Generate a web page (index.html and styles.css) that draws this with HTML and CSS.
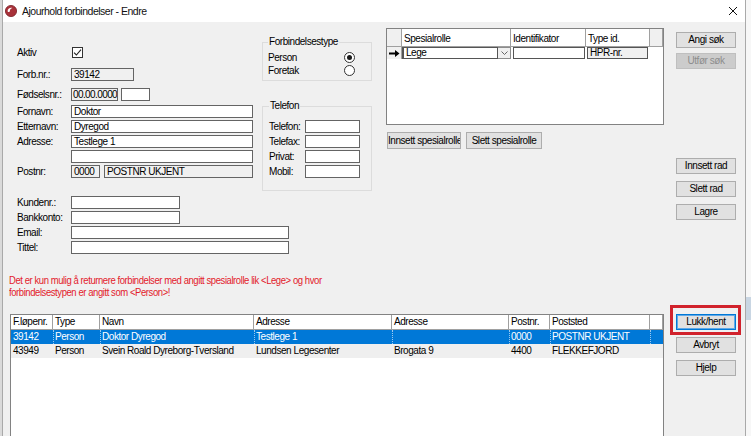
FILE: index.html
```html
<!DOCTYPE html>
<html lang="no">
<head>
<meta charset="utf-8">
<title>Ajourhold forbindelser - Endre</title>
<link rel="stylesheet" href="styles.css">
</head>
<body>
<div class="left-edge"></div>
<div class="window">
  <div class="titlebar">
    <svg class="app-icon" width="12" height="12" viewBox="0 0 12 12">
      <circle cx="6" cy="6" r="5.6" fill="#a8323a" stroke="#7a1e24" stroke-width="0.8"/>
      <path d="M2.6 6.2 C2.6 3.6 5 2.2 7.4 2.9 C5.6 3.4 4.7 4.6 4.9 6.6 C4.1 7.4 3 7.2 2.6 6.2 Z" fill="#fff"/>
    </svg>
    <span class="title">Ajourhold forbindelser - Endre</span>
    <svg class="close" width="10" height="10" viewBox="0 0 10 10">
      <path d="M1 1 L9 9 M9 1 L1 9" stroke="#111" stroke-width="1" fill="none"/>
    </svg>
  </div>
  <div class="client">
    <div class="main">
      <div class="top">
        <div class="form-top">
          <div class="row row-aktiv"><span class="lbl">Aktiv</span><span class="check"><svg width="9" height="9" viewBox="0 0 9 9"><path d="M1 4.6 L3.4 7 L8 1.6" stroke="#222" stroke-width="1.1" fill="none"/></svg></span></div>
          <div class="row row-forb"><span class="lbl">Forb.nr.:</span><span class="inp ro w63">39142</span></div>
          <div class="row row-fods"><span class="lbl">Fødselsnr.:</span><span class="inp ro w47 tight">00.00.0000</span><span class="inp w29 ml3"></span></div>
          <div class="row row-fornavn"><span class="lbl">Fornavn:</span><span class="inp w182">Doktor</span></div>
          <div class="row"><span class="lbl">Etternavn:</span><span class="inp w182">Dyregod</span></div>
          <div class="row"><span class="lbl">Adresse:</span><span class="inp w182">Testlege 1</span></div>
          <div class="row"><span class="lbl"></span><span class="inp w182"></span></div>
          <div class="row"><span class="lbl">Postnr:</span><span class="inp ro w29">0000</span><span class="inp ro w149 ml4">POSTNR UKJENT</span></div>
        </div>

        <div class="groups">
          <fieldset class="grp grp-type">
            <legend>Forbindelsestype</legend>
            <div class="opt"><span class="opt-lbl">Person</span><span class="radio on"></span></div>
            <div class="opt"><span class="opt-lbl">Foretak</span><span class="radio"></span></div>
          </fieldset>
          <fieldset class="grp grp-tel">
            <legend>Telefon</legend>
            <div class="row row-first"><span class="lbl-t">Telefon:</span><span class="inp w55"></span></div>
            <div class="row"><span class="lbl-t">Telefax:</span><span class="inp w55"></span></div>
            <div class="row"><span class="lbl-t">Privat:</span><span class="inp w55"></span></div>
            <div class="row"><span class="lbl-t">Mobil:</span><span class="inp w55"></span></div>
          </fieldset>
        </div>

        <div class="spec">
          <div class="sgrid">
            <div class="srow shead">
              <span class="c ind"></span>
              <span class="c">Spesialrolle</span>
              <span class="c">Identifikator</span>
              <span class="c">Type id.</span>
              <span class="c blank"></span>
            </div>
            <div class="srow sdata">
              <span class="c ind"><svg width="11" height="7" viewBox="0 0 11 7"><path d="M0 2.4 H6 V0 L10.5 3.5 L6 7 V4.6 H0 Z" fill="#000"/></svg></span>
              <span class="c c-lege"><span class="ed ed-lege">Lege</span><span class="dd"><svg width="9" height="6" viewBox="0 0 9 6"><path d="M1.5 1.5 L4.5 4.5 L7.5 1.5" stroke="#666" stroke-width="1" fill="none"/></svg></span></span>
              <span class="c c-id"><span class="ed"></span></span>
              <span class="c c-type"><span class="ed ro">HPR-nr.</span></span>
              <span class="c blank-d"></span>
            </div>
          </div>
          <div class="spec-btns">
            <button class="btn b74">Innsett spesialrolle</button>
            <button class="btn b76">Slett spesialrolle</button>
          </div>
        </div>

        <div class="form-bot">
          <div class="row row-first"><span class="lbl">Kundenr.:</span><span class="inp w109"></span></div>
          <div class="row"><span class="lbl">Bankkonto:</span><span class="inp w109"></span></div>
          <div class="row"><span class="lbl">Email:</span><span class="inp w218"></span></div>
          <div class="row"><span class="lbl">Tittel:</span><span class="inp w218"></span></div>
        </div>
      </div>

      <p class="msg">Det er kun mulig å returnere forbindelser med angitt spesialrolle lik &lt;Lege&gt; og hvor<br>forbindelsestypen er angitt som &lt;Person&gt;!</p>

      <div class="results">
        <div class="rrow rhead"><span>F.løpenr.</span><span>Type</span><span>Navn</span><span>Adresse</span><span>Adresse</span><span>Postnr.</span><span>Poststed</span><span></span></div>
        <div class="rrow sel"><span>39142</span><span>Person</span><span>Doktor Dyregod</span><span>Testlege 1</span><span></span><span>0000</span><span>POSTNR UKJENT</span><span></span></div>
        <div class="rrow alt"><span>43949</span><span>Person</span><span>Svein Roald Dyreborg-Tversland</span><span>Lundsen Legesenter</span><span>Brogata 9</span><span>4400</span><span>FLEKKEFJORD</span><span></span></div>
      </div>
    </div>

    <div class="side">
      <button class="btn sb b-angi">Angi søk</button>
      <button class="btn sb b-utfor" disabled>Utfør søk</button>
      <button class="btn sb b-innsett">Innsett rad</button>
      <button class="btn sb b-next">Slett rad</button>
      <button class="btn sb b-next">Lagre</button>
      <div class="mark"><button class="btn sb default">Lukk/hent</button></div>
      <button class="btn sb b-next">Avbryt</button>
      <button class="btn sb b-next">Hjelp</button>
    </div>
  </div>
</div>
<div class="right-edge"><div class="re-block"></div></div>
</body>
</html>
```

FILE: styles.css
```css
* { box-sizing: border-box; }
html, body { margin: 0; padding: 0; }
body {
  width: 751px;
  height: 436px;
  overflow: hidden;
  display: flex;
  background: #f4f4f4;
  font-family: "Liberation Sans", Arial, sans-serif;
  font-size: 10px;
  letter-spacing: -0.45px;
  color: #000;
}

.left-edge { width: 2px; flex: none; background: #dadada; }

.window {
  width: 744px;
  height: 436px;
  flex: none;
  display: flex;
  flex-direction: column;
  overflow: hidden;
  background: #f0f0f0;
  border-left: 1px solid #a9a9a9;
  border-right: 1px solid #a9a9a9;
}

.right-edge {
  flex: 1;
  background: #f7f7f7;
  padding-top: 297px;
}
.re-block { height: 23px; background: #c9d6e3; }

/* title bar */
.titlebar {
  height: 22px;
  flex: none;
  display: flex;
  align-items: center;
  background: #fff;
  padding: 0 7px 0 2px;
}
.app-icon { flex: none; margin-right: 5px; }
.title { font-size: 10.5px; letter-spacing: -0.5px; color: #111; }
.close { margin-left: auto; flex: none; }

/* client area */
.client { flex: 1; display: flex; min-height: 0; }
.main { width: 667px; flex: none; padding: 0 6px; }
.side {
  flex: 1;
  display: flex;
  flex-direction: column;
  align-items: flex-start;
  padding-left: 6px;
}

.top {
  display: grid;
  grid-template-columns: 253px 110px 14px 278px;
  grid-template-areas:
    "ftop groups . spec"
    "fbot fbot . .";
  align-items: start;
}
.form-top { grid-area: ftop; padding-left: 8px; }
.groups { grid-area: groups; }
.spec { grid-area: spec; margin-top: 6px; }
.form-bot { grid-area: fbot; padding-left: 8px; margin-top: 5px; }

/* rows & inputs */
.row {
  display: flex;
  align-items: center;
  height: 13px;
  margin-top: 2px;
}
.row-first { margin-top: 0; }
.row-aktiv { height: 11px; margin-top: 25px; }
.row-forb { margin-top: 10px; }
.row-fods { margin-top: 7px; }
.row-fornavn { margin-top: 4px; }

.lbl { width: 54px; flex: none; line-height: 13px; white-space: nowrap; }
.lbl-t { width: 36px; flex: none; line-height: 13px; white-space: nowrap; }

.inp {
  flex: none;
  display: block;
  height: 13px;
  background: #fff;
  border: 1px solid #646464;
  padding-left: 2px;
  line-height: 11px;
  white-space: nowrap;
  overflow: hidden;
}
.inp.ro { background: #f0f0f0; }
.inp.tight { padding-left: 1px; letter-spacing: -0.6px; }
.w29 { width: 29px; }
.w47 { width: 47px; }
.w55 { width: 55px; }
.w63 { width: 63px; }
.w109 { width: 109px; }
.w149 { width: 149px; }
.w182 { width: 182px; }
.w218 { width: 218px; }
.ml3 { margin-left: 3px; }
.ml4 { margin-left: 4px; }

.check {
  width: 11px;
  height: 11px;
  margin-left: 1px;
  border: 1px solid #333;
  background: #fff;
  display: flex;
  align-items: center;
  justify-content: center;
}

/* group boxes */
.grp {
  margin: 0;
  min-width: 0;
  border: 1px solid #dcdcdc;
  padding: 0 5px 0 5px;
}
.grp legend {
  padding: 0 1px;
  line-height: 10px;
}
.grp-type { margin-top: 15px; padding-top: 4px; padding-bottom: 3px; }
.grp-tel { margin-top: 20px; padding: 9px 5px 12px 6px; }

.opt { display: flex; align-items: center; height: 13px; }
.opt-lbl { flex: 1; }
.radio {
  width: 11px;
  height: 11px;
  margin-right: 11px;
  border: 1px solid #333;
  border-radius: 50%;
  background: #fff;
  display: flex;
  align-items: center;
  justify-content: center;
}
.radio.on::after {
  content: "";
  width: 5px;
  height: 5px;
  border-radius: 50%;
  background: #1a1a1a;
}

/* spesialrolle grid */
.sgrid {
  height: 97px;
  border: 1px solid #828282;
  background: #fff;
}
.srow {
  display: grid;
  grid-template-columns: 15px 109px 75px 64px 13px;
}
.shead { height: 18px; }
.shead .c {
  border-right: 1px solid #a0a0a0;
  border-bottom: 1px solid #a0a0a0;
  padding: 3px 0 0 2px;
  line-height: 13px;
  white-space: nowrap;
  overflow: hidden;
}
.shead .ind { background: #f0f0f0; }
.shead .blank { background: #f0f0f0; }
.sdata { height: 12px; }
.sdata .c { display: flex; height: 12px; }
.sdata .ind {
  background: #f0f0f0;
  border-right: 1px solid #a0a0a0;
  align-items: center;
  justify-content: center;
}
.ed {
  flex: 1;
  display: block;
  height: 12px;
  border: 1px solid #555;
  background: #fff;
  line-height: 10px;
  padding-left: 2px;
  white-space: nowrap;
}
.ed.ro { background: #f0f0f0; }
.ed-lege { border-left-width: 2px; }
.dd {
  width: 13px;
  flex: none;
  height: 12px;
  border: 1px solid #8c8c8c;
  border-left: none;
  background: #f0f0f0;
  display: flex;
  align-items: center;
  justify-content: center;
}
.c-id { padding: 0 1px 0 2px; }
.c-type { padding: 0 2px 0 1px; }

.spec-btns { display: flex; margin-top: 7px; padding-left: 1px; }

/* buttons */
.btn {
  font: inherit;
  letter-spacing: inherit;
  color: #000;
  background: #e1e1e1;
  border: 1px solid #adadad;
  padding: 0;
  margin: 0;
  height: 17px;
  line-height: 15px;
  text-align: center;
  white-space: nowrap;
  overflow: hidden;
}
.b74 { width: 74px; }
.b76 { width: 76px; margin-left: 5px; }
.sb { width: 60px; height: 16px; line-height: 14px; flex: none; }
.b-angi { margin-top: 10px; }
.b-utfor {
  margin-top: 5px;
  background: #cccccc;
  border-color: #bfbfbf;
  color: #8d8d8d;
}
.b-innsett { margin-top: 89px; }
.b-next { margin-top: 7px; }
.mark {
  margin: 85px -5px -5px -6px;
  border: 3px solid #d1222c;
  padding: 6px 2px 2px 3px;
}
.default {
  display: block;
  border-color: #0078d7;
  box-shadow: inset 0 0 0 1px #5fa8e6;
}

/* message */
.msg {
  margin: 21px 0 0 0;
  color: #e3202b;
  line-height: 12px;
  white-space: nowrap;
  transform: scaleX(0.95);
  transform-origin: 0 0;
}

/* results grid */
.results {
  margin: 15px 0 0 1px;
  width: 654px;
  height: 140px;
  border: 1px solid #828282;
  background: #fff;
}
.rrow {
  display: grid;
  grid-template-columns: 42px 47px 154px 138px 117px 41px 100px 13px;
  height: 14px;
  line-height: 14px;
}
.rrow span {
  padding-left: 2px;
  white-space: nowrap;
  overflow: hidden;
}
.rhead { height: 15px; }
.rhead span {
  border-right: 1px solid #a0a0a0;
  border-bottom: 1px solid #a0a0a0;
  line-height: 14px;
}
.rrow.sel { background: #0078d7; color: #fff; }
.rrow.sel span + span { border-left: 1px dotted #9cc8ee; padding-left: 1px; }
.rrow.alt { background: #efefef; }
```
